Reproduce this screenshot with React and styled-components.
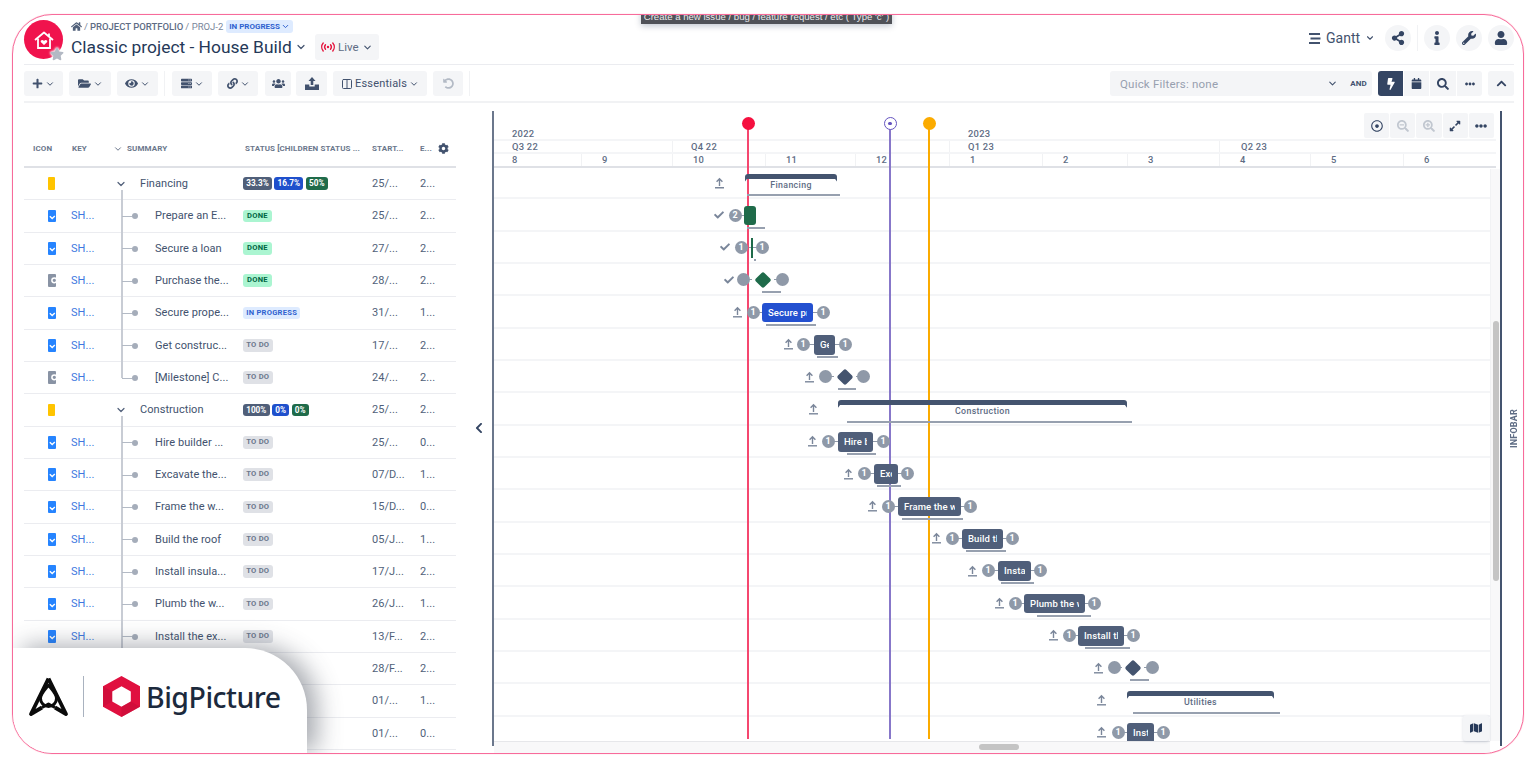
import React from 'react';
import styled, { createGlobalStyle, css } from 'styled-components';
import {
  FaHome, FaPlus, FaFolderOpen, FaEye, FaServer, FaLink, FaUsers, FaShareAlt, FaInfo, FaWrench, FaUser,
  FaBolt, FaCalendar, FaSearch, FaEllipsisH, FaChevronUp, FaChevronLeft, FaCog, FaCheck, FaMap, FaExpandAlt,
  FaRegDotCircle, FaSearchMinus, FaSearchPlus, FaUndoAlt, FaStar,
} from 'react-icons/fa';
import { ChevronDown, Columns2 } from 'lucide-react';

const Global = createGlobalStyle`
  html, body { margin: 0; padding: 0; background: #fff; }
  body { font-family: Roboto, "Liberation Sans", sans-serif; color: #42526e; }
  * { box-sizing: border-box; }
`;

const Page = styled.div`
  width: 1536px;
  height: 768px;
  padding: 14px 12px;
  overflow: hidden;
`;
const Frame = styled.div`
  position: relative;
  width: 1512px;
  height: 740px;
  border: 1px solid #f76b9b;
  border-radius: 40px;
  box-shadow: 0 0 1px #f9a;
  overflow: hidden;
  display: flex;
  flex-direction: column;
`;
const Tip = styled.div`
  position: absolute;
  left: 628px;
  top: -6px;
  width: 251px;
  height: 15px;
  background: #505258;
  color: #e8e8ec;
  font: 9.6px/15px "Liberation Sans", sans-serif;
  text-align: center;
  white-space: nowrap;
  overflow: hidden;
  box-shadow: 0 2px 6px rgba(9, 30, 66, .25);
  z-index: 5;
`;

/* ---------- header ---------- */
const Header = styled.header`
  flex: none;
  height: 50px;
  margin: 0 9px 0 11px;
  border-bottom: 1px solid #ebecf0;
  display: flex;
  align-items: flex-start;
`;
const Avatar = styled.div`
  position: relative;
  flex: none;
  width: 39px;
  height: 39px;
  margin-top: 5px;
  border-radius: 50%;
  background: #f0134d;
  display: flex;
  align-items: center;
  justify-content: center;
`;
const AvatarStar = styled.span`
  position: absolute;
  right: -1px;
  bottom: -2px;
  display: flex;
  color: #b3b9c4;
  font-size: 14px;
  filter: drop-shadow(0 0 1px #fff) drop-shadow(0 0 1px #fff);
`;
const TitleBlock = styled.div`
  margin-left: 8px;
  padding-top: 5px;
  display: flex;
  flex-direction: column;
`;
const Crumbs = styled.div`
  display: flex;
  align-items: center;
  gap: 2px;
  height: 13px;
  font-size: 9.5px;
  color: #7a869a;
  white-space: nowrap;
  svg { color: #505f79; }
`;
const CrumbStrong = styled.span`
  color: #5e6c84;
  font-weight: 500;
`;
const Pill = styled.span`
  display: inline-flex;
  align-items: center;
  gap: 1px;
  height: 13px;
  margin-left: 1px;
  padding: 0 3px;
  border-radius: 3px;
  background: #deebff;
  color: #2f62cf;
  font-size: 8px;
  font-weight: 700;
  svg { color: #2f62cf; }
`;
const TitleRow = styled.div`
  display: flex;
  align-items: center;
  height: 28px;
`;
const Title = styled.div`
  font-size: 17.4px;
  color: #253858;
  white-space: nowrap;
  display: flex;
  align-items: center;
  gap: 3px;
  svg { color: #42526e; }
`;
const LiveBtn = styled.div`
  margin-left: 8px;
  width: 64px;
  height: 26px;
  border-radius: 3px;
  background: #f4f5f7;
  display: flex;
  align-items: center;
  justify-content: center;
  gap: 3px;
  font-size: 11.5px;
  color: #5e6c84;
  svg { color: #42526e; }
`;
const HeaderRight = styled.div`
  margin-left: auto;
  padding-top: 10px;
  display: flex;
  align-items: center;
`;
const GanttLabel = styled.div`
  display: flex;
  align-items: center;
  gap: 5px;
  width: 76px;
  font-size: 14px;
  color: #42526e;
`;
const CircleBtn = styled.div`
  width: 26px;
  height: 26px;
  border-radius: 50%;
  background: #f4f5f7;
  color: #344563;
  display: flex;
  align-items: center;
  justify-content: center;
  font-size: 14px;
  margin-left: ${p => p.$gap || 0}px;
`;
const VDivider = styled.span`
  width: 1px;
  height: 26px;
  margin: 0 6px 0 6px;
  background: #f1f2f4;
`;

/* ---------- toolbar ---------- */
const Toolbar = styled.div`
  flex: none;
  height: 38px;
  margin: 0 9px 0 11px;
  padding-top: 6px;
  border-bottom: 2px solid #f1f2f4;
  display: flex;
  align-items: flex-start;
`;
const ToolBtn = styled.div`
  flex: none;
  width: ${p => p.$w}px;
  height: 25px;
  margin-left: ${p => p.$gap ?? 6}px;
  border-radius: 3px;
  background: #f4f5f7;
  color: ${p => (p.$muted ? '#b3bac5' : '#42526e')};
  display: flex;
  align-items: center;
  justify-content: center;
  gap: 2px;
  font-size: 11px;
  letter-spacing: .2px;
  svg.main { color: ${p => (p.$muted ? '#b3bac5' : '#42526e')}; }
`;
const ToolSep = styled.span`
  flex: none;
  width: 1px;
  height: 25px;
  margin: 0 1px 0 6px;
  background: #f1f2f4;
`;
const Filter = styled.div`
  flex: none;
  margin-left: auto;
  width: 262px;
  height: 25px;
  padding: 0 5px 0 10px;
  border-radius: 3px;
  background: #f4f5f7;
  display: flex;
  align-items: center;
  font-size: 11.5px;
  color: #97a0af;
  letter-spacing: .2px;
  svg { color: #42526e; }
`;
const FilterSpace = styled.span`
  flex: 1;
`;
const FilterAnd = styled.b`
  margin-left: 12px;
  font-size: 8px;
  color: #42526e;
`;
const SegGroup = styled.div`
  flex: none;
  margin-left: 6px;
  display: flex;
  height: 25px;
  border-radius: 3px;
  overflow: hidden;
`;
const Seg = styled.div`
  width: ${p => p.$w || 26}px;
  display: flex;
  align-items: center;
  justify-content: center;
  font-size: 12px;
  background: ${p => (p.$on ? '#344563' : '#f4f5f7')};
  color: ${p => (p.$on ? '#fff' : '#344563')};
  border-right: 1px solid #fff;
  &:last-child { border-right: 0; }
`;

/* ---------- main ---------- */
const Main = styled.div`
  flex: 1;
  min-height: 0;
  display: flex;
`;
const LeftPanel = styled.section`
  flex: none;
  width: 432px;
  margin-left: 11px;
`;
const Cols = css`
  display: grid;
  grid-template-columns: 47px 40px 132px 129px 48px 36px;
  align-items: center;
`;
const TableHead = styled.div`
  ${Cols}
  height: 65px;
  padding-top: 28px;
  border-bottom: 2px solid #dfe1e6;
  font-size: 8px;
  font-weight: 700;
  color: #6b778c;
  letter-spacing: .1px;
  white-space: nowrap;
`;
const HeadIcon = styled.span`
  padding-left: 9px;
`;
const HeadKey = styled.span`
  padding-left: 1px;
`;
const HeadSummary = styled.span`
  display: flex;
  align-items: center;
  margin-left: 2px;
  gap: 4px;
  svg { color: #6b778c; }
`;
const HeadStatus = styled.span`
  padding-left: 2px;
`;
const HeadEnd = styled.span`
  display: flex;
  align-items: center;
  justify-content: space-between;
  padding-right: 7px;
  svg { color: #42526e; font-size: 11px; }
`;
const TRow = styled.div`
  ${Cols}
  height: 32.33px;
  border-bottom: 1px solid #ebecf0;
  font-size: 11px;
  letter-spacing: .05px;
  color: #505f79;
  white-space: nowrap;
`;
const IconCell = styled.div`
  display: flex;
  justify-content: flex-start;
  padding-left: 23.5px;
`;
const TypeIcon = styled.span`
  position: relative;
  display: block;
  width: ${p => (p.$kind === 'epic' ? 7 : 8.5)}px;
  height: 12.5px;
  margin-left: ${p => (p.$kind === 'epic' ? 0.5 : 0)}px;
  border-radius: 1px;
  background: ${p => ({ epic: '#ffc400', task: '#2684ff', mile: '#8993a4' }[p.$kind])};
  overflow: hidden;
`;
const KeyCell = styled.span`
  color: #3f78e0;
`;
const SumCell = styled.div`
  position: relative;
  height: 100%;
  display: flex;
  align-items: center;
  padding-left: ${p => (p.$group ? 29 : 44)}px;
  color: #42526e;
`;
const GroupChevron = styled.span`
  position: absolute;
  left: 4px;
  top: 10px;
  display: flex;
  color: #505f79;
`;
const TreeV = styled.span`
  position: absolute;
  left: 10px;
  width: 1.5px;
  top: ${p => (p.$start ? '22px' : '-1px')};
  height: ${p => (p.$start ? '11px' : p.$last ? '17px' : '33px')};
  background: #c8ccd4;
`;
const TreeH = styled.span`
  position: absolute;
  left: 11px;
  top: 50%;
  width: 10px;
  height: 1px;
  background: #b3bac5;
  &::after {
    content: '';
    position: absolute;
    left: 10px;
    top: -2.5px;
    width: 6px;
    height: 6px;
    border-radius: 50%;
    background: #a5adba;
  }
`;
const StatusCell = styled.div`
  display: flex;
  gap: 2.5px;
`;
const Lozenge = styled.span`
  display: inline-block;
  height: 12.5px;
  padding: 0 ${p => (p.$pct ? 3.2 : p.$tone === 'done' ? 4 : 3.2)}px;
  border-radius: 3px;
  font-size: ${p => (p.$pct ? 8.2 : 7.6)}px;
  line-height: 12.5px;
  font-weight: 700;
  letter-spacing: ${p => (p.$pct ? 0 : 0.25)}px;
  ${p => ({
    done: 'background:#abf5d1;color:#006644;',
    prog: 'background:#deebff;color:#2f62cf;',
    todo: 'background:#dfe1e6;color:#6b778c;',
    slate: 'background:#505f79;color:#fff;',
    blue: 'background:#1f50cc;color:#fff;',
    green: 'background:#1f6b4a;color:#fff;',
  }[p.$tone])}
`;
const Collapse = styled.div`
  flex: none;
  width: 36px;
  display: flex;
  align-items: center;
  justify-content: center;
  padding: 0 0 0 10px;
  color: #344563;
  font-size: 12px;
`;

/* ---------- gantt ---------- */
const Gantt = styled.section`
  position: relative;
  flex: none;
  width: 1010px;
  height: 642px;
  margin-top: 8px;
  padding: 0 2px;
  display: flex;
  flex-direction: column;
  &::before, &::after {
    content: '';
    position: absolute;
    top: 0;
    width: 2px;
    height: 635px;
  }
  &::before { left: 0; background: #6b778c; }
  &::after { right: 0; background: #44546f; }
`;
const TimeHead = styled.div`
  flex: none;
  height: 57px;
  margin-right: 4px;
  border-bottom: 2px solid #dfe1e6;
  font-size: 9.4px;
  font-weight: 500;
  color: #5e6c84;
  letter-spacing: .25px;
  display: flex;
  flex-direction: column;
  justify-content: flex-end;
`;
const YearRow = styled.div`
  display: flex;
  height: 14px;
  line-height: 13px;
  border-bottom: 2px solid #f4f5f7;
`;
const TimeCell = styled.div`
  flex: none;
  width: ${p => p.$w}px;
  padding-left: ${p => p.$pad ?? 18}px;
  border-left: ${p => (p.$first ? 0 : '1px solid #f1f2f4')};
`;
const YearCell = styled(TimeCell)`
  border-left: 0;
`;
const QRow = styled(YearRow)`
  height: 13px;
  line-height: 11px;
`;
const WeekRow = styled.div`
  display: flex;
  height: 12px;
  line-height: 11px;
`;
const GanttBody = styled.div`
  position: relative;
  flex: 1;
  min-height: 0;
  margin-top: -1px;
  overflow: hidden;
`;
const Rows = styled.div`
  margin-right: 10px;
`;
const GRow = styled.div`
  position: relative;
  height: 32.33px;
  border-bottom: 2px solid #f4f5f7;
`;
const placed = p => ({ style: { left: p.$x - 494 + 'px', width: p.$w ? p.$w + 'px' : undefined } });
const placedOnChart = p => ({ style: { left: p.$x - 492 + 'px' } });
const Knob = styled.span.attrs(placed)`
  position: absolute;
  top: 9.3px;
  width: 13px;
  height: 13px;
  margin-left: -6.5px;
  border-radius: 50%;
  background: #8f99a8;
  color: #fff;
  font-size: 9px;
  font-weight: 700;
  line-height: 13px;
  text-align: center;
  z-index: 3;
`;
const Wire = styled.span.attrs(placed)`
  position: absolute;
  top: 15.5px;
  height: 1px;
  background: #8f99a8;
`;
const Mark = styled.span.attrs(placed)`
  position: absolute;
  top: 9.3px;
  margin-left: -6px;
  width: 12px;
  height: 13px;
  color: #7a869a;
  display: flex;
  align-items: center;
  justify-content: center;
`;
const Bar = styled.div.attrs(placed)`
  position: absolute;
  top: 6.5px;
  height: 19.5px;
  border-radius: ${p => (p.$thin ? 0 : 3)}px;
  background: ${p => p.$color || '#505f7a'};
  padding: 0 ${p => (p.$thin ? 0 : 6)}px;
  color: #fff;
  font-size: 9.5px;
  font-weight: 500;
  line-height: 19.5px;
  letter-spacing: .1px;
  z-index: 3;
`;
const BarClip = styled.span`
  display: block;
  overflow: hidden;
  white-space: nowrap;
`;
const Speck = styled.span.attrs(placed)`
  position: absolute;
  top: 27px;
  width: 2px;
  height: 2px;
  background: #97a0af;
`;
const Diamond = styled.span.attrs(placed)`
  position: absolute;
  top: 9.8px;
  margin-left: -6px;
  width: 12px;
  height: 12px;
  border-radius: 2px;
  transform: rotate(45deg);
  background: ${p => p.$color || '#44546f'};
  z-index: 3;
`;
const Under = styled.span.attrs(placed)`
  position: absolute;
  top: 27.3px;
  height: 2px;
  background: #97a0af;
  z-index: 3;
`;
const Bracket = styled.div.attrs(placed)`
  position: absolute;
  top: 6.5px;
  height: 5px;
  border-radius: 3px 3px 0 0;
  background: #44546f;
  z-index: 3;
  &::before, &::after {
    content: '';
    position: absolute;
    top: 4px;
    width: 3px;
    height: 4px;
    background: #44546f;
  }
  &::before { left: 0; clip-path: polygon(0 0, 100% 0, 0 100%); }
  &::after { right: 0; clip-path: polygon(0 0, 100% 0, 100% 100%); }
`;
const BracketLabel = styled.div`
  position: absolute;
  left: 0;
  right: 0;
  top: 6px;
  text-align: center;
  font-size: 8.8px;
  font-weight: 500;
  letter-spacing: .35px;
  color: #5e6c84;
`;
const Line = styled.span.attrs(placedOnChart)`
  position: absolute;
  top: 13px;
  bottom: 14px;
  width: 2px;
  margin-left: -1px;
  background: ${p => p.$color};
  z-index: 2;
`;
const Pin = styled.span.attrs(placedOnChart)`
  position: absolute;
  top: 6px;
  width: 13px;
  height: 13px;
  margin-left: -6.5px;
  border-radius: 50%;
  background: ${p => (p.$ring ? '#fff' : p.$color)};
  border: ${p => (p.$ring ? `1.5px solid ${p.$color}` : '0')};
  z-index: 3;
  display: flex;
  align-items: center;
  justify-content: center;
  &::after {
    content: '';
    display: ${p => (p.$ring ? 'block' : 'none')};
    width: 3.5px;
    height: 3.5px;
    border-radius: 50%;
    background: ${p => p.$color};
  }
`;
const ZoomBar = styled.div`
  position: absolute;
  right: 8px;
  top: 2px;
  display: flex;
  gap: 1px;
  z-index: 4;
`;
const ZoomBtn = styled.div`
  width: 25.2px;
  height: 25px;
  background: #f4f5f7;
  border-radius: 2px;
  display: flex;
  align-items: center;
  justify-content: center;
  font-size: 12px;
  color: ${p => (p.$muted ? '#c1c7d0' : '#344563')};
`;
const VTrack = styled.div`
  position: absolute;
  top: 58px;
  right: 2px;
  bottom: 12px;
  width: 10px;
  background: #f8f8f9;
  border-left: 1px solid #f1f2f4;
  z-index: 3;
`;
const VThumb = styled.div`
  position: absolute;
  top: 152px;
  left: 2px;
  width: 6px;
  height: 260px;
  border-radius: 3px;
  background: #c4c4c4;
`;
const HTrack = styled.div`
  flex: none;
  position: relative;
  height: 12px;
  margin-right: 10px;
  background: #f8f8f9;
  border-top: 1px solid #e6e7ea;
  z-index: 3;
`;
const HThumb = styled.div`
  position: absolute;
  left: 485px;
  top: 2px;
  width: 40px;
  height: 6px;
  border-radius: 3px;
  background: #c4c4c4;
`;
const MapBtn = styled.div`
  position: absolute;
  left: 971px;
  bottom: 12px;
  width: 26px;
  height: 26px;
  background: #f4f5f7;
  border-radius: 3px;
  box-shadow: 0 1px 3px rgba(9, 30, 66, .15);
  display: flex;
  align-items: center;
  justify-content: center;
  color: #253858;
  font-size: 12px;
  z-index: 4;
`;
const Infobar = styled.div`
  flex: 1;
  display: flex;
  align-items: flex-start;
  justify-content: center;
  padding: 306px 0 0 3px;
`;
const InfoText = styled.span`
  writing-mode: vertical-rl;
  transform: rotate(180deg);
  font-size: 9px;
  font-weight: 700;
  color: #5e6c84;
  letter-spacing: .2px;
`;

/* ---------- brand card ---------- */
const Brand = styled.div`
  position: absolute;
  left: 0;
  bottom: 0;
  width: 294px;
  height: 105px;
  padding: 0 0 8px 15px;
  background: #fff;
  border-top-right-radius: 62px;
  box-shadow: 10px -2px 24px rgba(60, 66, 80, .45);
  display: flex;
  align-items: center;
  z-index: 6;
`;
const BrandSep = styled.span`
  width: 1px;
  height: 41px;
  margin: 0 19px 0 14px;
  background: #a9b2bf;
`;
const BrandName = styled.span`
  margin-left: 6px;
  font-family: "Noto Sans", sans-serif;
  font-size: 28.5px;
  font-weight: 500;
  color: #1c2a3d;
  letter-spacing: -.5px;
`;

/* ---------- small drawings ---------- */
const Chev = ({ s = 11, w = 2.4 }) => <ChevronDown size={s} strokeWidth={w} />;

const UpArrow = () => (
  <svg width="11" height="12" viewBox="0 0 11 12" fill="none" stroke="#7a869a" strokeWidth="1.4">
    <path d="M5.5 9V2M2.6 4.8 5.5 1.8l2.9 3" />
    <path d="M1 10.8h9" />
  </svg>
);
const House = () => (
  <svg width="20" height="18" viewBox="0 0 20 18" fill="none" stroke="#fff" strokeWidth="1.8">
    <path d="M1 9 10 1.500 19 9" strokeLinejoin="round" />
    <path d="M4 7.500V17h12V7.500" />
    <path d="M15 2.500V5" />
    <path d="M10 14 7 11.200c-1.300-1.500 1.400-3.200 3-1.200 1.600-2 4.300-.3 3 1.200z" fill="#fff" stroke="none" />
  </svg>
);
const LiveIcon = () => (
  <svg width="14" height="10" viewBox="0 0 14 10" fill="none" stroke="#e5173f" strokeWidth="1.4" strokeLinecap="round">
    <circle cx="7" cy="5" r="1.2" fill="#e5173f" stroke="none" />
    <path d="M4.5 2.800a3.400 3.400 0 0 0 0 4.400M9.500 2.800a3.400 3.400 0 0 1 0 4.400" />
    <path d="M2.200 1a6.200 6.200 0 0 0 0 8M11.800 1a6.200 6.200 0 0 1 0 8" />
  </svg>
);
const Lines = () => (
  <svg width="12" height="11" viewBox="0 0 12 11" fill="#42526e">
    <rect x="0" y="0" width="11" height="2" />
    <rect x="1.5" y="4.5" width="10" height="2" />
    <rect x="0" y="9" width="11" height="2" />
  </svg>
);
const TaskGlyphSvg = styled.svg`
  display: block;
`;
const TaskGlyph = () => (
  <TaskGlyphSvg width="8.5" height="12.5" viewBox="0 0 8.500 12.500" fill="none" stroke="#fff" strokeWidth="1.4">
    <path d="M1.800 6.300 4.200 8.600 6.800 6.100" />
  </TaskGlyphSvg>
);
const MileGlyph = () => (
  <TaskGlyphSvg width="8.5" height="12.5" viewBox="0 0 8.500 12.500" fill="none" stroke="#fff" strokeWidth="1.5">
    <circle cx="6.300" cy="6.300" r="2.400" />
  </TaskGlyphSvg>
);
const TriLogo = () => (
  <svg width="41" height="42" viewBox="0 0 41 42" fill="none" stroke="#0b0b0b" strokeLinejoin="round">
    <path d="M20.500 2.500 3 38l11-6.500M20.500 2.500 38 38l-11-6.500" strokeWidth="3.800" />
    <path d="M20.500 9c3 4.500 8 8.500 8 13.500a8 8 0 0 1-16 0c0-5 5-9 8-13.500z" strokeWidth="3" />
    <path d="M14 31.500 20.500 28l6.500 3.500" strokeWidth="3" />
  </svg>
);
const HexLogo = () => (
  <svg width="37" height="41" viewBox="0 0 37 41">
    <path fillRule="evenodd" fill="#e0103f" d="M18.500 0 37 10.250v20.500L18.500 41 0 30.750v-20.500zM18.500 10.200 9.200 15.400v10.200l9.300 5.200 9.300-5.200V15.400z" />
    <path fill="#c40d38" d="M0 10.250 9.200 15.400v10.200L0 30.750zM18.500 30.800 27.800 25.600 37 30.750 18.500 41z" opacity=".55" />
  </svg>
);
const UploadGlyph = () => (
  <svg width="14" height="13" viewBox="0 0 14 13" fill="#42526e">
    <path d="M7 0 10.500 4H8.300v4H5.700V4H3.500z" />
    <path d="M0 7.500h4.300V9.500h5.400V7.500H14V13H0z" />
  </svg>
);

/* ---------- data ---------- */
const tableRows = [
  { g: 1, name: 'Financing', st: [['slate', '33.3%'], ['blue', '16.7%'], ['green', '50%']], a: '25/...', b: '2...' },
  { k: 'task', name: 'Prepare an E...', s: 'done', a: '25/...', b: '2...' },
  { k: 'task', name: 'Secure a loan', s: 'done', a: '27/...', b: '2...' },
  { k: 'mile', name: 'Purchase the...', s: 'done', a: '28/...', b: '2...' },
  { k: 'task', name: 'Secure prope...', s: 'prog', a: '31/...', b: '1...' },
  { k: 'task', name: 'Get construc...', s: 'todo', a: '17/...', b: '2...' },
  { k: 'mile', name: '[Milestone] C...', s: 'todo', a: '24/...', b: '2...', last: 1 },
  { g: 1, name: 'Construction', st: [['slate', '100%'], ['blue', '0%'], ['green', '0%']], a: '25/...', b: '2...' },
  { k: 'task', name: 'Hire builder ...', s: 'todo', a: '25/...', b: '0...' },
  { k: 'task', name: 'Excavate the...', s: 'todo', a: '07/D...', b: '1...' },
  { k: 'task', name: 'Frame the w...', s: 'todo', a: '15/D...', b: '0...' },
  { k: 'task', name: 'Build the roof', s: 'todo', a: '05/J...', b: '1...' },
  { k: 'task', name: 'Install insula...', s: 'todo', a: '17/J...', b: '2...' },
  { k: 'task', name: 'Plumb the w...', s: 'todo', a: '26/J...', b: '1...' },
  { k: 'task', name: 'Install the ex...', s: 'todo', a: '13/F...', b: '2...' },
  { k: 'mile', name: '[Milestone] ...', s: 'todo', a: '28/F...', b: '2...', last: 1 },
  { g: 1, name: 'Utilities', st: [['slate', '0%'], ['blue', '0%'], ['green', '0%']], a: '01/...', b: '1...' },
  { k: 'task', name: 'Install plumb...', s: 'todo', a: '01/...', b: '0...' },
];
const statusText = { done: 'DONE', prog: 'IN PROGRESS', todo: 'TO DO' };

const weeks = [['8', 87], ['9', 91], ['10', 93], ['11', 90], ['12', 94], ['1', 93], ['2', 85], ['3', 92], ['4', 91], ['5', 93], ['6', 92]];

const GREEN = '#1f6b4a';
const BLUE = '#2350d0';
const gantt = [
  { t: 'b', label: 'Financing', x: 745, w: 92, mark: 719, ux: 747, uw: 93 },
  { t: 't', x: 744, w: 12, color: GREEN, k1: [735, '2'], mark: 719, check: 1, ux: 747, uw: 18 },
  { t: 't', x: 751, w: 2, color: GREEN, k1: [741, '1'], k2: [762, '1'], mark: 725, check: 1, thin: 1 },
  { t: 'd', x: 763, color: GREEN, k1: [743, ''], k2: [782, ''], mark: 729, check: 1, ux: 762, uw: 19 },
  { t: 't', x: 762, w: 51, color: BLUE, text: 'Secure property', k1: [753, '1'], k2: [823, '1'], mark: 737, ux: 766, uw: 50 },
  { t: 't', x: 814, w: 21, text: 'Get construction', k1: [803, '1'], k2: [845, '1'], mark: 788, ux: 817, uw: 21 },
  { t: 'd', x: 845, k1: [825, ''], k2: [863, ''], mark: 809, ux: 838, uw: 18 },
  { t: 'b', label: 'Construction', x: 838, w: 289, mark: 813, ux: 847, uw: 285 },
  { t: 't', x: 838, w: 35, text: 'Hire builder', k1: [828, '1'], k2: [883, '1'], mark: 812, ux: 847, uw: 29 },
  { t: 't', x: 874, w: 24, text: 'Excavate', k1: [864, '1'], k2: [907, '1'], mark: 848, ux: 877, uw: 24 },
  { t: 't', x: 898, w: 63, text: 'Frame the walls', k1: [888, '1'], k2: [970, '1'], mark: 872, ux: 902, uw: 61 },
  { t: 't', x: 962, w: 41, text: 'Build the roof', k1: [952, '1'], k2: [1012, '1'], mark: 936, ux: 966, uw: 40 },
  { t: 't', x: 998, w: 33, text: 'Install', k1: [988, '1'], k2: [1040, '1'], mark: 972, ux: 1001, uw: 33 },
  { t: 't', x: 1024, w: 61, text: 'Plumb the walls', k1: [1015, '1'], k2: [1094, '1'], mark: 999, ux: 1037, uw: 54 },
  { t: 't', x: 1078, w: 46, text: 'Install the ex', k1: [1069, '1'], k2: [1133, '1'], mark: 1053, ux: 1085, uw: 45 },
  { t: 'd', x: 1133, k1: [1114, ''], k2: [1152, ''], mark: 1098, ux: 1130, uw: 19 },
  { t: 'b', label: 'Utilities', x: 1127, w: 147, mark: 1101, ux: 1133, uw: 147 },
  { t: 't', x: 1127, w: 27, text: 'Install', k1: [1118, '1'], k2: [1163, '1'], mark: 1101 },
];

const GanttItem = ({ r }) => {
  const left = r.t === 'd' ? r.x - 11 : r.x;
  const right = r.t === 'd' ? r.x + 11 : r.x + (r.w || 0);
  return (
    <>
      <Mark $x={r.mark}>{r.check ? <FaCheck size={10} /> : <UpArrow />}</Mark>
      {r.k1 && <Wire $x={r.k1[0]} $w={left - r.k1[0]} />}
      {r.k2 && <Wire $x={right} $w={r.k2[0] - right} />}
      {r.k1 && <Knob $x={r.k1[0]}>{r.k1[1]}</Knob>}
      {r.k2 && <Knob $x={r.k2[0]}>{r.k2[1]}</Knob>}
      {r.t === 't' && (
        <Bar $x={r.x} $w={r.w} $color={r.color} $thin={r.thin}>
          {r.text && <BarClip>{r.text}</BarClip>}
        </Bar>
      )}
      {r.thin && <Speck $x={754} />}
      {r.t === 'd' && <Diamond $x={r.x} $color={r.color} />}
      {r.t === 'b' && (
        <Bracket $x={r.x} $w={r.w}>
          <BracketLabel>{r.label}</BracketLabel>
        </Bracket>
      )}
      {r.ux && <Under $x={r.ux} $w={r.uw} />}
    </>
  );
};

export default function App() {
  return (
    <Page>
      <Global />
      <Frame>
        <Tip>Create a new issue / bug / feature request / etc ( Type 'c' )</Tip>
        <Header>
          <Avatar>
            <House />
            <AvatarStar><FaStar /></AvatarStar>
          </Avatar>
          <TitleBlock>
            <Crumbs>
              <FaHome size={11} />
              <span>/</span>
              <CrumbStrong>PROJECT PORTFOLIO</CrumbStrong>
              <span>/ PROJ-2</span>
              <Pill>IN PROGRESS <Chev s={9} w={2.6} /></Pill>
            </Crumbs>
            <TitleRow>
              <Title>Classic project - House Build <Chev s={12} /></Title>
              <LiveBtn><LiveIcon /> Live <Chev s={11} /></LiveBtn>
            </TitleRow>
          </TitleBlock>
          <HeaderRight>
            <GanttLabel><Lines /> Gantt <Chev s={10} w={2.6} /></GanttLabel>
            <CircleBtn><FaShareAlt /></CircleBtn>
            <VDivider />
            <CircleBtn><FaInfo /></CircleBtn>
            <CircleBtn $gap={6}><FaWrench /></CircleBtn>
            <CircleBtn $gap={6}><FaUser /></CircleBtn>
          </HeaderRight>
        </Header>

        <Toolbar>
          <ToolBtn $w={39} $gap={0}><FaPlus className="main" size={11} /><Chev s={10} /></ToolBtn>
          <ToolBtn $w={42}><FaFolderOpen className="main" size={13} /><Chev s={10} /></ToolBtn>
          <ToolBtn $w={41}><FaEye className="main" size={13} /><Chev s={10} /></ToolBtn>
          <ToolSep />
          <ToolBtn $w={40}><FaServer className="main" size={11} /><Chev s={10} /></ToolBtn>
          <ToolBtn $w={40}><FaLink className="main" size={11} /><Chev s={10} /></ToolBtn>
          <ToolBtn $w={26} $gap={7}><FaUsers className="main" size={13} /></ToolBtn>
          <ToolBtn $w={31} $gap={5}><UploadGlyph /></ToolBtn>
          <ToolBtn $w={94}><Columns2 className="main" size={12} /> Essentials <Chev s={10} /></ToolBtn>
          <ToolBtn $w={30}  $muted><FaUndoAlt className="main" size={11} /></ToolBtn>
          <ToolSep />
          <Filter>
            Quick Filters: none
            <FilterSpace />
            <Chev s={11} />
            <FilterAnd>AND</FilterAnd>
          </Filter>
          <SegGroup>
            <Seg $on><FaBolt /></Seg>
            <Seg><FaCalendar size={11} /></Seg>
            <Seg $w={27}><FaSearch /></Seg>
            <Seg $w={25}><FaEllipsisH size={10} /></Seg>
          </SegGroup>
          <SegGroup>
            <Seg><FaChevronUp size={11} /></Seg>
          </SegGroup>
        </Toolbar>

        <Main>
          <LeftPanel>
            <TableHead>
              <HeadIcon>ICON</HeadIcon>
              <HeadKey>KEY</HeadKey>
              <HeadSummary><Chev s={10} /> SUMMARY</HeadSummary>
              <HeadStatus>STATUS [CHILDREN STATUS ...</HeadStatus>
              <span>START...</span>
              <HeadEnd>E... <FaCog /></HeadEnd>
            </TableHead>
            {tableRows.map((r, i) => (
              <TRow key={i}>
                <IconCell>
                  <TypeIcon $kind={r.g ? 'epic' : r.k}>
                    {r.k === 'task' && <TaskGlyph />}
                    {r.k === 'mile' && <MileGlyph />}
                  </TypeIcon>
                </IconCell>
                <KeyCell>{r.g ? '' : 'SH...'}</KeyCell>
                <SumCell $group={r.g}>
                  {r.g ? (
                    <>
                      <GroupChevron><Chev s={12} /></GroupChevron>
                      <TreeV $start />
                    </>
                  ) : (
                    <>
                      <TreeV $last={r.last} />
                      <TreeH />
                    </>
                  )}
                  {r.name}
                </SumCell>
                <StatusCell>
                  {r.g
                    ? r.st.map(([tone, txt]) => <Lozenge key={tone} $pct $tone={tone}>{txt}</Lozenge>)
                    : <Lozenge $tone={r.s}>{statusText[r.s]}</Lozenge>}
                </StatusCell>
                <span>{r.a}</span>
                <span>{r.b}</span>
              </TRow>
            ))}
          </LeftPanel>

          <Collapse><FaChevronLeft /></Collapse>

          <Gantt>
            <ZoomBar>
              <ZoomBtn><FaRegDotCircle /></ZoomBtn>
              <ZoomBtn $muted><FaSearchMinus /></ZoomBtn>
              <ZoomBtn $muted><FaSearchPlus /></ZoomBtn>
              <ZoomBtn><FaExpandAlt /></ZoomBtn>
              <ZoomBtn><FaEllipsisH /></ZoomBtn>
            </ZoomBar>
            <TimeHead>
              <YearRow>
                <YearCell $first $w={456} $pad={18}>2022</YearCell>
                <YearCell $w={550} $pad={18}>2023</YearCell>
              </YearRow>
              <QRow>
                <TimeCell $first $w={178} $pad={18}>Q3 22</TimeCell>
                <TimeCell $w={277} $pad={18}>Q4 22</TimeCell>
                <TimeCell $w={270} $pad={18}>Q1 23</TimeCell>
                <TimeCell $w={276} $pad={21}>Q2 23</TimeCell>
              </QRow>
              <WeekRow>
                {weeks.map(([n, w], i) => (
                  <TimeCell key={n} $first={i === 0} $w={w} $pad={i === 0 ? 18 : 20}>{n}</TimeCell>
                ))}
              </WeekRow>
            </TimeHead>
            <GanttBody>
              <Rows>
                {gantt.map((r, i) => (
                  <GRow key={i}><GanttItem r={r} /></GRow>
                ))}
              </Rows>
            </GanttBody>
            <HTrack><HThumb /></HTrack>
            <Line $x={748} $color="#f5476f" />
            <Line $x={890} $color="#8777c9" />
            <Line $x={929} $color="#fbab00" />
            <Pin $x={748} $color="#f5103f" />
            <Pin $x={890} $color="#6554c0" $ring />
            <Pin $x={929} $color="#fbab00" />
            <VTrack><VThumb /></VTrack>
            <MapBtn><FaMap /></MapBtn>
          </Gantt>
          <Infobar><InfoText>INFOBAR</InfoText></Infobar>
        </Main>

        <Brand>
          <TriLogo />
          <BrandSep />
          <HexLogo />
          <BrandName>BigPicture</BrandName>
        </Brand>
      </Frame>
    </Page>
  );
}
